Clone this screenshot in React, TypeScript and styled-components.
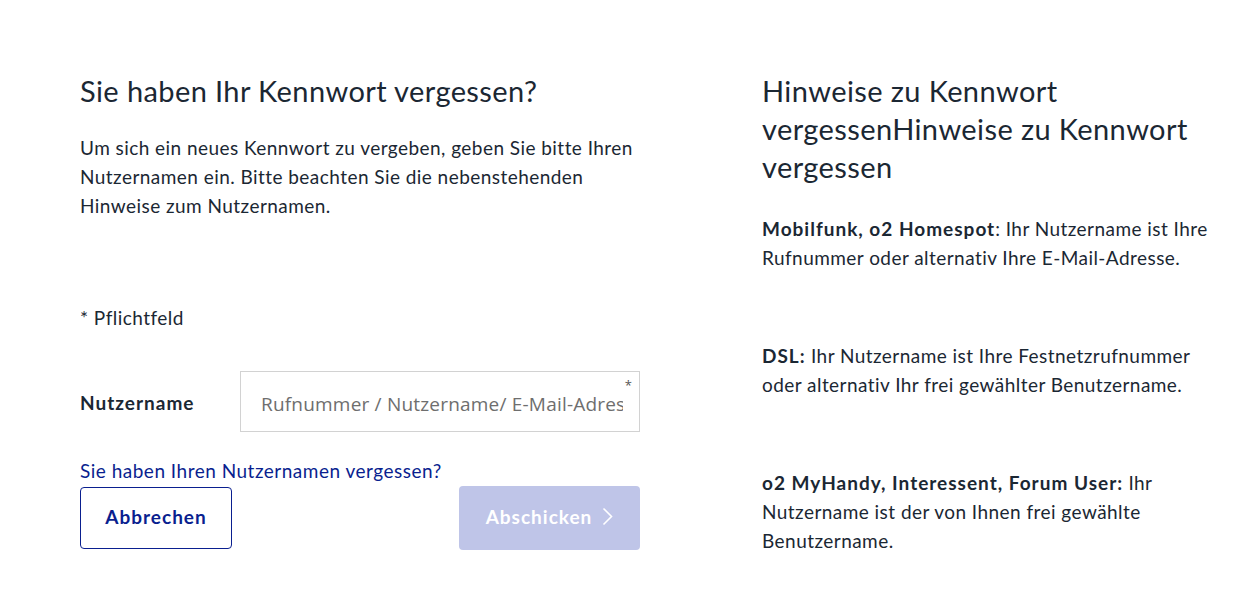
import React from "react";
import styled, { createGlobalStyle } from "styled-components";

const Global = createGlobalStyle`
  html, body { margin: 0; padding: 0; background: #ffffff; }
  body { font-family: Lato, "Noto Sans", sans-serif; color: #1b2733; }
  * { box-sizing: border-box; }
  b { letter-spacing: 1px; }
`;

const Page = styled.div`
  display: grid;
  grid-template-columns: 560px 446px;
  column-gap: 122px;
  padding: 72px 0 0 80px;
  width: 1248px;
  height: 597px;
`;

const Column = styled.div`
  display: flex;
  flex-direction: column;
`;

const Heading = styled.h1`
  margin: 0;
  font-size: 29px;
  letter-spacing: 0.4px;
  line-height: 38px;
  font-weight: 400;
  color: #1b2733;
`;

const Text = styled.p<{ $mt?: number }>`
  margin: ${(p) => p.$mt ?? 0}px 0 0 0;
  font-size: 19px;
  letter-spacing: 0.45px;
  line-height: 29px;
  color: #1b2733;
`;

const FormRow = styled.div`
  display: grid;
  grid-template-columns: 160px 400px;
  align-items: center;
  margin-top: 39px;
`;

const Label = styled.label`
  font-size: 19px;
  font-weight: 700;
  letter-spacing: 1px;
  line-height: 29px;
  padding-top: 2px;
  color: #1b2733;
`;

const InputWrap = styled.div`
  position: relative;
`;

const Input = styled.input`
  width: 400px;
  height: 61px;
  border: 1px solid #d2d2d2;
  border-radius: 0;
  padding: 4px 16px 0 20px;
  font-family: "Open Sans", "Noto Sans", sans-serif;
  font-size: 19px;
  letter-spacing: 0.2px;
  color: #1b2733;
  outline: none;
  &::placeholder { color: #6e6e6e; }
`;

const Required = styled.span`
  position: absolute;
  top: 5px;
  right: 8px;
  font-family: "Open Sans", sans-serif;
  font-size: 13px;
  color: #555;
`;

const Link = styled.a`
  margin-top: 24px;
  font-size: 19px;
  letter-spacing: 0.5px;
  line-height: 29px;
  color: #0a1f8f;
  text-decoration: none;
  align-self: flex-start;
`;

const Actions = styled.div`
  display: flex;
  justify-content: space-between;
  align-items: center;
  margin-top: 1px;
`;

const Button = styled.button<{ $variant: "outline" | "primary" }>`
  display: inline-flex;
  align-items: center;
  justify-content: center;
  gap: 10px;
  padding: 0 0 3px 0;
  font-family: Lato, "Noto Sans", sans-serif;
  font-size: 19px;
  letter-spacing: 1px;
  font-weight: 700;
  border-radius: 4px;
  cursor: pointer;
  ${(p) =>
    p.$variant === "outline"
      ? `
    width: 152px; height: 62px;
    background: #fff; color: #0a1f8f;
    border: 1px solid #0a1f8f;
  `
      : `
    width: 181px; height: 64px;
    background: #bfc5e8; color: #fff;
    border: none;
  `}
`;

const Chevron = () => (
  <svg width="11" height="19" viewBox="0 0 11 19" fill="none">
    <polyline points="1.5,1.5 9.5,9.5 1.5,17.5" stroke="#ffffff" strokeWidth="1.6" />
  </svg>
);

export default function App() {
  return (
    <>
      <Global />
      <Page>
        <Column>
          <Heading>Sie haben Ihr Kennwort vergessen?</Heading>
          <Text $mt={23}>
            Um sich ein neues Kennwort zu vergeben, geben Sie bitte Ihren
            Nutzernamen ein. Bitte beachten Sie die nebenstehenden Hinweise zum
            Nutzernamen.
          </Text>
          <Text $mt={83}>* Pflichtfeld</Text>
          <FormRow>
            <Label htmlFor="user">Nutzername</Label>
            <InputWrap>
              <Input id="user" placeholder="Rufnummer / Nutzername/ E-Mail-Adresse" />
              <Required>*</Required>
            </InputWrap>
          </FormRow>
          <Link href="#">Sie haben Ihren Nutzernamen vergessen?</Link>
          <Actions>
            <Button $variant="outline">Abbrechen</Button>
            <Button $variant="primary">
              Abschicken
              <Chevron />
            </Button>
          </Actions>
        </Column>
        <Column>
          <Heading>Hinweise zu Kennwort vergessenHinweise zu Kennwort vergessen</Heading>
          <Text $mt={28}>
            <b>Mobilfunk, o2 Homespot</b>: Ihr Nutzername ist Ihre Rufnummer
            oder alternativ Ihre E-Mail-Adresse.
          </Text>
          <Text $mt={69}>
            <b>DSL:</b> Ihr Nutzername ist Ihre Festnetzrufnummer oder
            alternativ Ihr frei gewählter Benutzername.
          </Text>
          <Text $mt={69}>
            <b>o2 MyHandy, Interessent, Forum User:</b> Ihr Nutzername ist der
            von Ihnen frei gewählte Benutzername.
          </Text>
        </Column>
      </Page>
    </>
  );
}
